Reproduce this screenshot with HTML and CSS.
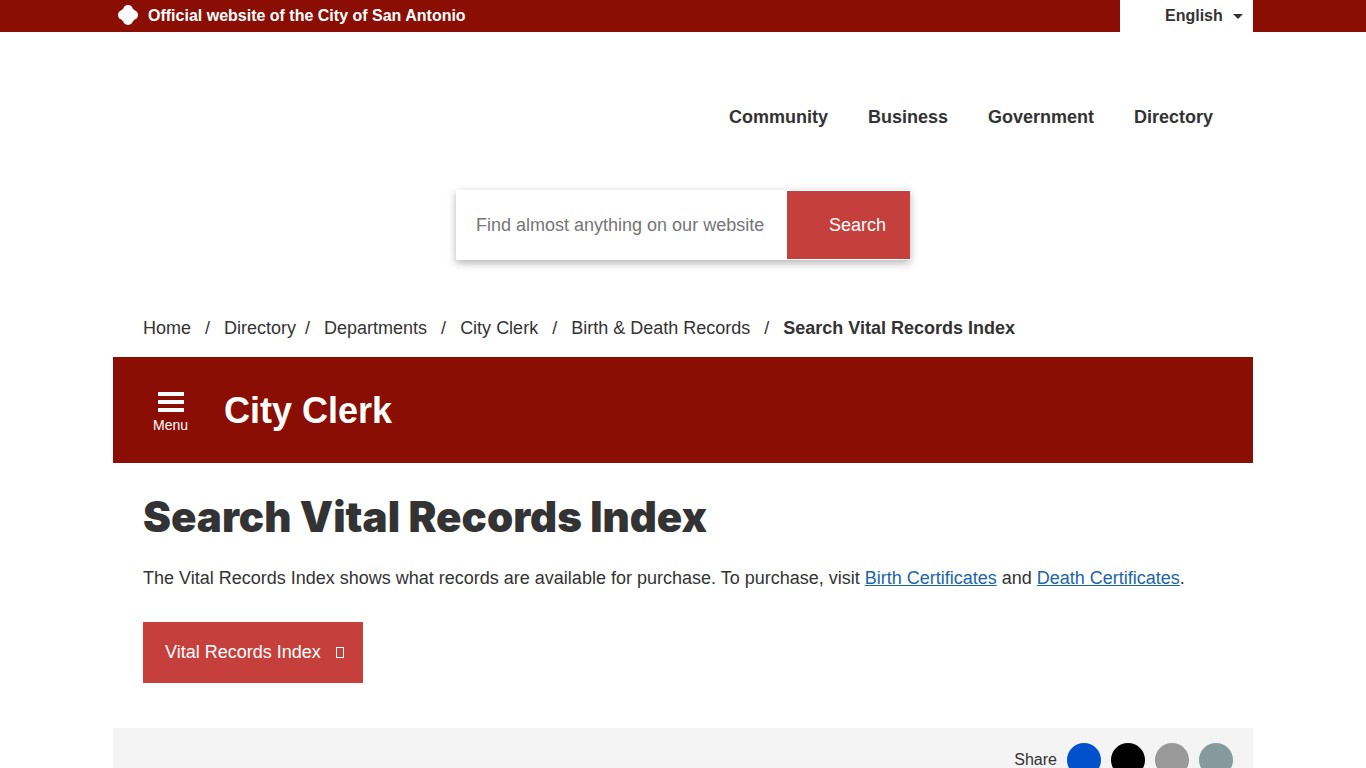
FILE: index.html
```html
<!DOCTYPE html>
<html lang="en">
<head>
    <meta charset="UTF-8">
    <meta name="viewport" content="width=device-width, initial-scale=1.0">
    <title>Search Vital Records Index</title>
    <link rel="stylesheet" href="styles.css">
</head>
<body>
    <div class="top-bar">
        <div class="container top-bar-inner">
            <div class="official">
                <svg class="official-icon" width="20" height="20" viewBox="0 0 20 20" fill="#fff" aria-hidden="true">
                    <circle cx="10" cy="5" r="5"/>
                    <circle cx="15" cy="10" r="5"/>
                    <circle cx="10" cy="15" r="5"/>
                    <circle cx="5" cy="10" r="5"/>
                    <rect x="4" y="4" width="12" height="12" rx="1"/>
                </svg>
                <span>Official website of the City of San Antonio</span>
            </div>
            <div class="language">
                <select class="language-select" aria-label="Language">
                    <option>English</option>
                </select>
                <span class="caret"></span>
            </div>
        </div>
    </div>

    <header class="container">
        <nav class="main-nav">
            <a href="#">Community</a>
            <a href="#">Business</a>
            <a href="#">Government</a>
            <a href="#">Directory</a>
        </nav>
        <form class="search-form">
            <input class="search-input" type="text" placeholder="Find almost anything on our website" aria-label="Search">
            <button class="search-button" type="submit">Search</button>
        </form>
    </header>

    <main class="container">
        <ol class="breadcrumb">
            <li><a href="#">Home</a></li>
            <li class="tight"><a href="#">Directory</a></li>
            <li><a href="#">Departments</a></li>
            <li><a href="#">City Clerk</a></li>
            <li><a href="#">Birth &amp; Death Records</a></li>
            <li class="active">Search Vital Records Index</li>
        </ol>

        <div class="department">
            <button class="menu-button" type="button">
                <svg width="26" height="20" viewBox="0 0 26 20" aria-hidden="true">
                    <path fill="#fff" d="M0 0h26v4H0zM0 8h26v4H0zM0 16h26v4H0z"/>
                </svg>
                <span>Menu</span>
            </button>
            <div class="department-name">City Clerk</div>
        </div>

        <div class="content">
            <h1>Search Vital Records Index</h1>
            <p>The Vital Records Index shows what records are available for purchase. To purchase, visit <a href="#">Birth Certificates</a> and <a href="#">Death Certificates</a>.</p>
            <a class="index-button" href="#">Vital Records Index <span class="link-icon"></span></a>
        </div>

        <div class="share">
            <span>Share</span>
            <a class="share-link facebook" href="#" aria-label="Facebook"></a>
            <a class="share-link x" href="#" aria-label="X"></a>
            <a class="share-link print" href="#" aria-label="Print"></a>
            <a class="share-link email" href="#" aria-label="Email"></a>
        </div>
    </main>
</body>
</html>
```
FILE: styles.css
```css
* {
    box-sizing: border-box;
}

body {
    margin: 0;
    background: #fff;
    color: #333;
    font-family: Arial, "Liberation Sans", sans-serif;
    font-size: 18px;
    line-height: 26px;
}

.container {
    max-width: 1140px;
    margin: 0 auto;
}

/* Top bar */
.top-bar {
    background: #8a0e04;
    color: #fff;
    font-size: 16px;
    font-weight: bold;
    line-height: 32px;
}

.top-bar-inner {
    display: flex;
    justify-content: space-between;
}

.official {
    display: flex;
    align-items: center;
    gap: 10px;
    padding-left: 5px;
}

.official-icon {
    margin-bottom: 2px;
}

.language {
    display: flex;
    align-items: center;
    gap: 10px;
    padding: 0 10px 0 45px;
    background: #fff;
}

.language-select {
    height: 32px;
    padding: 0;
    border: 0;
    appearance: none;
    background: none;
    color: #333;
    font: inherit;
}

.caret {
    border: 5px solid transparent;
    border-top-color: #333;
    border-bottom: 0;
}

/* Header */
.main-nav {
    display: flex;
    flex-wrap: wrap;
    justify-content: flex-end;
    gap: 40px;
    padding: 72px 40px 60px;
    font-weight: bold;
}

.main-nav a {
    color: #333;
    text-decoration: none;
}

.search-form {
    display: flex;
    width: 454px;
    max-width: 100%;
    height: 70px;
    margin: 0 auto;
    padding: 1px 0;
    background: #fff;
    box-shadow: 0 3px 8px rgba(0, 0, 0, 0.3);
}

.search-input {
    flex: 1;
    min-width: 0;
    padding: 0 20px;
    border: 0;
    font: inherit;
}

.search-input::placeholder {
    color: #757575;
}

.search-button {
    padding: 0 24px 0 42px;
    border: 0;
    background: #c5403d;
    color: #fff;
    font: inherit;
}

/* Breadcrumb */
.breadcrumb {
    display: flex;
    flex-wrap: wrap;
    margin: 0;
    padding: 55px 30px 16px;
    list-style: none;
}

.breadcrumb a {
    color: #333;
    text-decoration: none;
}

.breadcrumb li:not(:last-child)::after {
    content: "/";
    margin: 0 14px;
}

.breadcrumb .tight:not(:last-child)::after {
    margin-left: 9px;
}

.breadcrumb .active {
    font-weight: bold;
}

/* Department banner */
.department {
    display: flex;
    align-items: center;
    gap: 36px;
    padding: 30px 40px 28px;
    background: #8a0e04;
    color: #fff;
}

.menu-button {
    display: flex;
    flex-direction: column;
    align-items: center;
    gap: 4px;
    padding: 4px 0 0;
    border: 0;
    background: none;
    color: #fff;
    font-family: inherit;
    font-size: 14px;
    line-height: 18px;
}

.department-name {
    font-size: 36px;
    font-weight: bold;
    line-height: 48px;
}

/* Content */
.content {
    padding: 30px 30px 45px;
}

.content h1 {
    margin: 0 0 24px;
    font-family: "Arial Black", Inter, sans-serif;
    font-size: 42px;
    font-weight: 900;
    line-height: 48px;
}

.content p {
    margin: 0 0 31px;
}

.content p a {
    color: #1c65a6;
}

.index-button {
    display: inline-flex;
    align-items: center;
    gap: 15px;
    height: 61px;
    padding: 0 19px 2px 22px;
    background: #c5403d;
    color: #fff;
    text-decoration: none;
    vertical-align: top;
}

.link-icon {
    width: 8px;
    height: 11px;
    margin-top: 2px;
    border: 1px solid #fff;
}

/* Share bar */
.share {
    display: flex;
    align-items: center;
    justify-content: flex-end;
    gap: 10px;
    padding: 15px 20px;
    background: #f4f4f4;
    font-size: 16px;
}

.share-link {
    width: 34px;
    height: 34px;
    border-radius: 50%;
}

.facebook {
    background: #0051cc;
}

.x {
    background: #000;
}

.print {
    background: #999;
}

.email {
    background: #849a9c;
}
```
